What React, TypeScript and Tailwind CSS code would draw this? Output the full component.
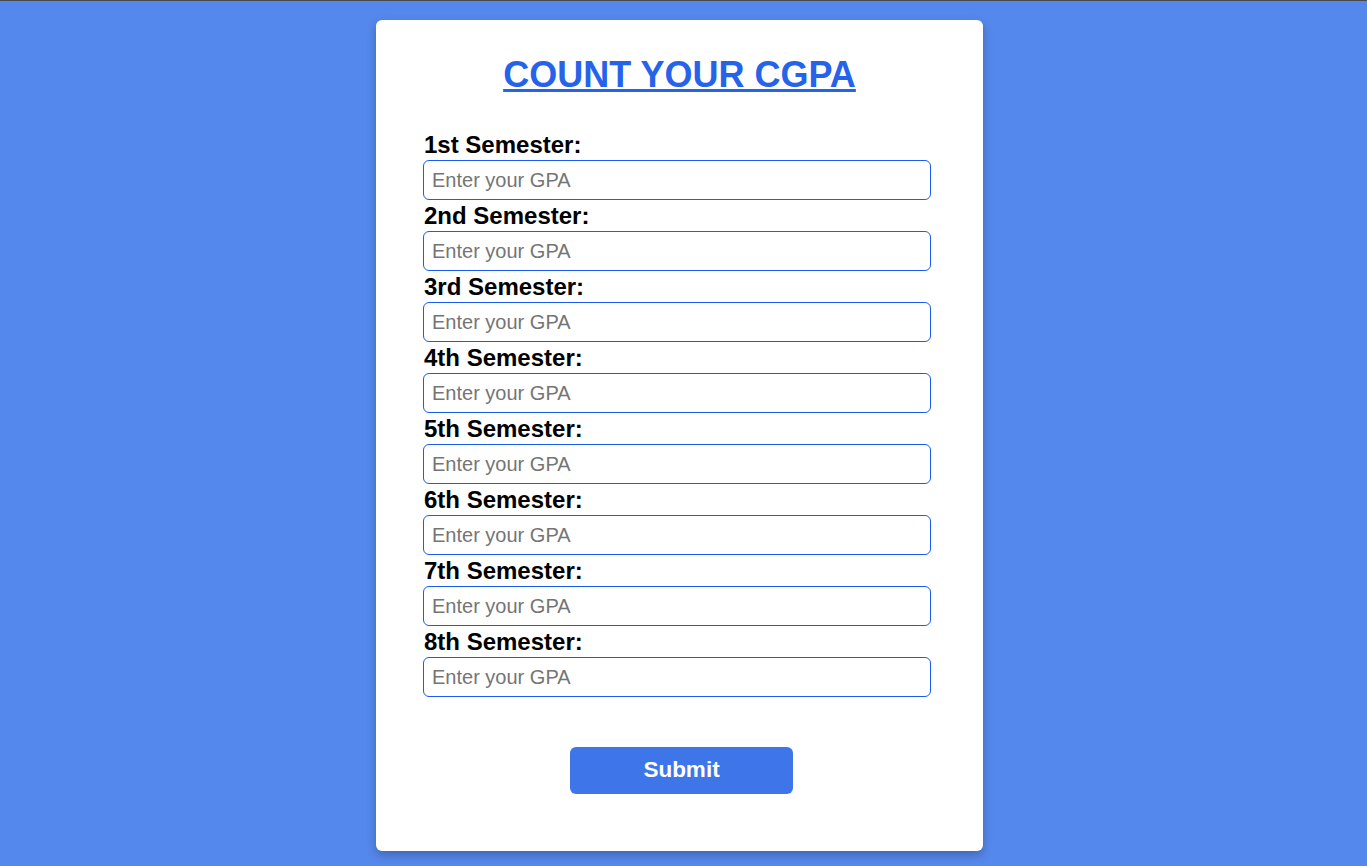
import React from "react";

const sems = ["1st", "2nd", "3rd", "4th", "5th", "6th", "7th", "8th"];

export default function App() {
  return (
    <div
      className="min-h-[866px] border-t border-[#4a4a4a] bg-[#5588ec] pt-[19px]"
      style={{ fontFamily: '"Liberation Sans", Arial, sans-serif' }}
    >
      <div className="ml-[376px] w-[607px] h-[831px] rounded-[6px] bg-white shadow-[0_4px_10px_rgba(0,0,0,0.25)] pl-[47px] pr-[52px] pt-[34px]">
        <h1 className="text-center text-[36px] leading-[42px] font-bold text-[#2563eb] underline decoration-[3px] underline-offset-[2px] ml-[5px]">
          COUNT YOUR CGPA
        </h1>
        <form className="mt-[34px] flex flex-col">
          {sems.map((s) => (
            <div key={s} className="flex flex-col">
              <label className="text-[24px] leading-[28px] font-bold text-black pl-[1px] pt-[1px] mb-[1px]">
                {s} Semester:
              </label>
              <input
                type="text"
                placeholder="Enter your GPA"
                className="h-[40px] w-[508px] rounded-[6px] border border-[#1a5cf0] px-[8px] text-[20px] text-black placeholder:text-[#757575] outline-none mb-[1px]"
                style={{ fontFamily: '"Liberation Sans", Arial, sans-serif' }}
              />
            </div>
          ))}
          <div className="flex justify-center mt-[49px] pl-[9px]">
            <button
              type="button"
              className="w-[223px] h-[47px] rounded-[6px] bg-[#3e76ea] text-white text-[22.5px] leading-[26px] font-bold pb-[2px]"
              style={{ fontFamily: '"Liberation Sans", Arial, sans-serif' }}
            >
              Submit
            </button>
          </div>
        </form>
      </div>
    </div>
  );
}
